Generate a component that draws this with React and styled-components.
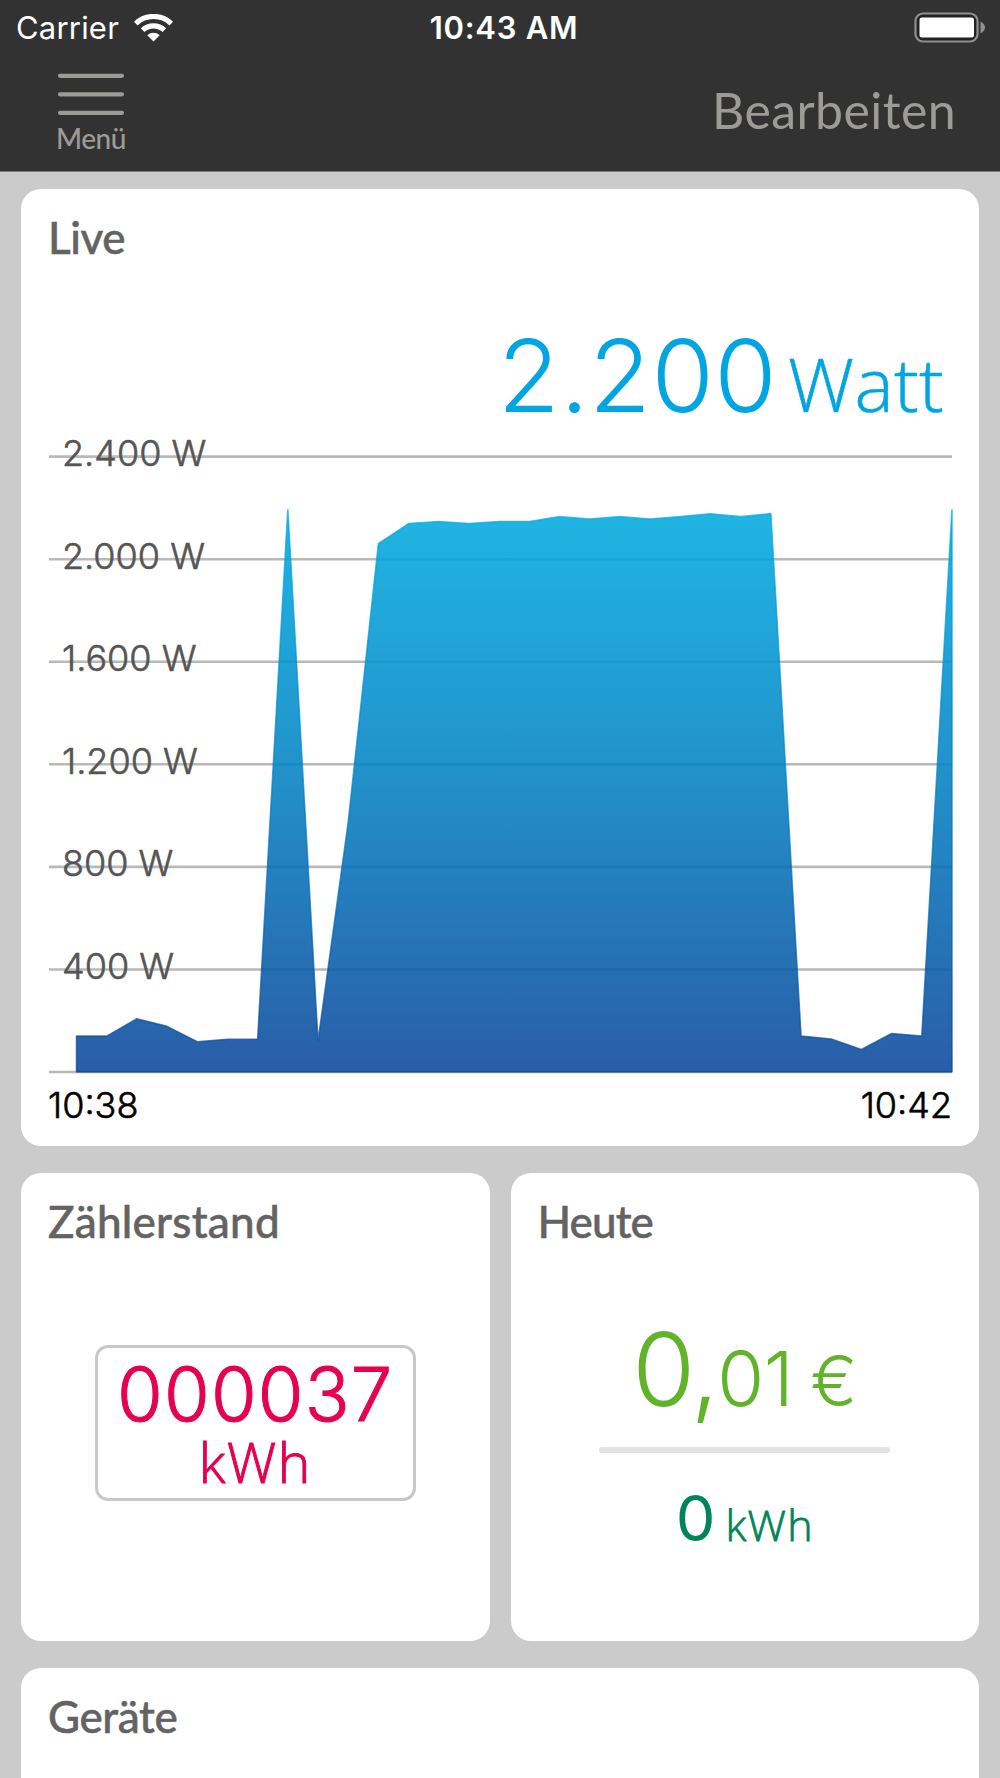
import styled, { createGlobalStyle } from "styled-components";

const GlobalStyles = createGlobalStyle`
  *, *::before, *::after {
    box-sizing: border-box;
  }

  body {
    margin: 0;
    background: #cbcbcb;
    font-family: Lato, "Open Sans", sans-serif;
    overflow: hidden;
  }
`;

const Screen = styled.div`
  width: 1000px;
  height: 1778px;
  overflow: hidden;
  background: #cbcbcb;
`;

const Header = styled.header`
  height: 172px;
  background: #323232;
  border-bottom: 1px solid #7d7d7d;
`;

const StatusBar = styled.div`
  display: grid;
  grid-template-columns: 1fr auto 1fr;
  align-items: center;
  height: 55px;
  padding: 0 15px 0 16px;
  color: #fff;
  font-family: Inter, sans-serif;
  font-size: 31px;
  line-height: 55px;
`;

const Carrier = styled.div`
  display: flex;
  align-items: center;
  gap: 15px;
  letter-spacing: 0.2px;
`;

const Clock = styled.div`
  font-weight: 600;
  letter-spacing: 0.7px;
  padding-left: 7px;
`;

const Battery = styled.svg`
  justify-self: end;
`;

const NavBar = styled.nav`
  display: flex;
  justify-content: space-between;
  height: 116px;
  padding: 18px 44px 0 57px;
  color: #9d9b97;
`;

const MenuButton = styled.button`
  display: flex;
  flex-direction: column;
  align-items: center;
  gap: 5px;
  width: 70px;
  padding: 0 2px 0 0;
  border: none;
  background: none;
  color: inherit;
  font-family: inherit;
  font-size: 28px;
  font-weight: 500;
  letter-spacing: -0.5px;
  line-height: 32px;
`;

const EditButton = styled.button`
  height: 74px;
  padding: 0;
  border: none;
  background: none;
  color: inherit;
  font-family: inherit;
  font-size: 50px;
  letter-spacing: 0.4px;
  line-height: 74px;
`;

const Dashboard = styled.main`
  display: grid;
  grid-template-columns: 1fr 1fr;
  grid-template-rows: 957px 468px 468px;
  column-gap: 21px;
  row-gap: 27px;
  padding: 17px 21px 0;
`;

const Card = styled.section`
  display: flex;
  flex-direction: column;
  grid-column: ${(props) => (props.$wide ? "1 / -1" : "auto")};
  padding: 21px 28px 0;
  border-radius: 20px;
  background: #fff;
`;

const Title = styled.h2`
  margin: 0 0 0 -1px;
  color: #636363;
  font-size: 44px;
  font-weight: 500;
  letter-spacing: ${(props) => props.$spacing || "-0.4px"};
  line-height: 54px;
  -webkit-text-stroke: 0.5px;
`;

const Power = styled.div`
  display: flex;
  align-items: baseline;
  justify-content: flex-end;
  height: 120px;
  margin-top: 51px;
  padding-right: 7px;
  color: #00a5e1;
  line-height: 120px;
  font-weight: 300;
`;

const PowerValue = styled.span`
  font-family: Inter, sans-serif;
  font-size: 101px;
  letter-spacing: 0.4px;
`;

const PowerUnit = styled.span`
  margin-left: 11px;
  font-family: "Open Sans", sans-serif;
  font-size: 74px;
  letter-spacing: 0.3px;
  -webkit-text-stroke: 0.6px;
`;

const Chart = styled.svg`
  display: block;
  margin-top: -19px;
`;

const AxisLabel = styled.text`
  fill: #555;
  stroke: #555;
  stroke-width: 0.6px;
  font-family: Inter, sans-serif;
  font-size: 36px;
  font-weight: 300;
`;

const TimeRange = styled.div`
  display: flex;
  justify-content: space-between;
  margin: 7px -1px 0;
  color: #000;
  font-family: Inter, sans-serif;
  font-size: 36px;
  font-weight: 300;
  line-height: 44px;
  -webkit-text-stroke: 0.6px;
`;

const Meter = styled.div`
  align-self: center;
  width: 321px;
  height: 156px;
  margin-top: 97px;
  border: 3px solid #c8c8c8;
  border-radius: 13px;
  color: #e60050;
  font-weight: 300;
  text-align: center;
  -webkit-text-stroke: 1px;
`;

const MeterValue = styled.div`
  height: 64px;
  margin-top: 14px;
  font-family: Inter, sans-serif;
  font-size: 74px;
  letter-spacing: 1.2px;
  line-height: 64px;
`;

const MeterUnit = styled.div`
  height: 66px;
  margin-top: 3px;
  font-family: "Open Sans", sans-serif;
  font-size: 55px;
  letter-spacing: 1.6px;
  line-height: 66px;
`;

const Today = styled.div`
  display: flex;
  flex-direction: column;
  align-items: center;
`;

const Cost = styled.div`
  display: flex;
  align-items: baseline;
  height: 100px;
  margin-top: 71px;
  color: #61b329;
  font-family: Inter, sans-serif;
  font-size: 102px;
  font-weight: 300;
  letter-spacing: -2px;
  line-height: 100px;
`;

const Cents = styled.span`
  font-size: 76px;
  letter-spacing: -0.5px;
`;

const Currency = styled.span`
  margin-left: 17px;
  font-size: 70px;
  letter-spacing: 0;
`;

const Divider = styled.hr`
  width: 291px;
  height: 6px;
  margin: 28px 0 0;
  border: none;
  border-radius: 3px;
  background: #e3e3e3;
`;

const Energy = styled.div`
  display: flex;
  align-items: baseline;
  height: 70px;
  margin-top: 30px;
  color: #008558;
  font-family: Inter, sans-serif;
  font-size: 63px;
  font-weight: 400;
  line-height: 70px;
`;

const EnergyUnit = styled.span`
  margin-left: 10px;
  font-family: "Open Sans", sans-serif;
  font-size: 43px;
  font-weight: 300;
  letter-spacing: 1.3px;
  -webkit-text-stroke: 0.8px;
`;

// one sample every ten seconds or so, in watts
const samples = [
  140, 140, 208, 178, 118, 128, 128, 2195, 120, 975, 2061, 2139, 2147, 2139,
  2147, 2147, 2166, 2157, 2166, 2157, 2166, 2177, 2166, 2178, 140, 129, 88, 150,
  140, 2195,
];

const gridValues = [2400, 2000, 1600, 1200, 800, 400, 0];

const CHART_START = 27.5;
const CHART_END = 903;
const BASELINE = 656;

function yFor(watts) {
  return BASELINE - watts * 0.2564;
}

function LiveChart() {
  const step = (CHART_END - CHART_START) / (samples.length - 1);
  const line = samples
    .map((watts, i) => `${CHART_START + i * step},${yFor(watts)}`)
    .join(" ");
  const area = `${CHART_START},${BASELINE} ${line} ${CHART_END},${BASELINE}`;

  return (
    <Chart width="904" height="660" viewBox="0 0 904 660">
      <defs>
        <linearGradient
          id="power"
          gradientUnits="userSpaceOnUse"
          x1="0"
          y1="94"
          x2="0"
          y2={BASELINE}
        >
          <stop offset="0" stopColor="#00abe0" />
          <stop offset="0.45" stopColor="#0384c4" />
          <stop offset="1" stopColor="#0b479b" />
        </linearGradient>
      </defs>
      {gridValues.map((value) => (
        <g key={value}>
          <line
            x1="0"
            x2="903"
            y1={yFor(value)}
            y2={yFor(value)}
            stroke="#b9b9b9"
            strokeWidth="2.6"
          />
          {value > 0 && (
            <AxisLabel x="13" y={yFor(value) + 9.5}>
              {value.toLocaleString("de-DE")} W
            </AxisLabel>
          )}
        </g>
      ))}
      <polygon points={area} fill="url(#power)" fillOpacity="0.88" />
      <polygon
        points={area}
        fill="none"
        stroke="url(#power)"
        strokeWidth="1.6"
        strokeOpacity="0.7"
        strokeLinejoin="bevel"
      />
    </Chart>
  );
}

function WifiIcon() {
  return (
    <svg width="39" height="28" viewBox="0 0 39 28" fill="none" stroke="#fff">
      <path d="M1.8 9.6 C11.5 0.1 27.5 0.1 37.2 9.6" strokeWidth="5.2" />
      <path d="M8.6 16.2 C14.8 10.4 24.2 10.4 30.4 16.2" strokeWidth="5.2" />
      <path
        d="M13.3 21.2 C16.8 17.9 22.2 17.9 25.7 21.2 L19.5 27.4 Z"
        fill="#fff"
        stroke="none"
      />
    </svg>
  );
}

function BatteryIcon() {
  return (
    <Battery width="71" height="31" viewBox="0 0 71 31">
      <rect
        x="1.5"
        y="1.5"
        width="62"
        height="28"
        rx="7.5"
        fill="#222"
        stroke="#8f8f8f"
        strokeWidth="2.2"
      />
      <rect x="5.5" y="5.5" width="54.5" height="20" rx="2.5" fill="#fff" />
      <path d="M66.5 9.5 Q71 12 71 15.5 Q71 19 66.5 21.5 Z" fill="#8f8f8f" />
    </Battery>
  );
}

function MenuIcon() {
  return (
    <svg
      width="68"
      height="44"
      viewBox="0 0 68 44"
      stroke="#9d9b97"
      strokeWidth="4.2"
      strokeLinecap="round"
    >
      <path d="M3 2.8H65M3 21.3H65M3 39.8H65" />
    </svg>
  );
}

function App() {
  return (
    <Screen>
      <GlobalStyles />
      <Header>
        <StatusBar>
          <Carrier>
            Carrier
            <WifiIcon />
          </Carrier>
          <Clock>10:43 AM</Clock>
          <BatteryIcon />
        </StatusBar>
        <NavBar>
          <MenuButton>
            <MenuIcon />
            Menü
          </MenuButton>
          <EditButton>Bearbeiten</EditButton>
        </NavBar>
      </Header>

      <Dashboard>
        <Card $wide>
          <Title>Live</Title>
          <Power>
            <PowerValue>2.200</PowerValue>
            <PowerUnit>Watt</PowerUnit>
          </Power>
          <LiveChart />
          <TimeRange>
            <span>10:38</span>
            <span>10:42</span>
          </TimeRange>
        </Card>

        <Card>
          <Title $spacing="0.25px">Zählerstand</Title>
          <Meter>
            <MeterValue>000037</MeterValue>
            <MeterUnit>kWh</MeterUnit>
          </Meter>
        </Card>

        <Card>
          <Title $spacing="-0.9px">Heute</Title>
          <Today>
            <Cost>
              0,<Cents>01</Cents>
              <Currency>€</Currency>
            </Cost>
            <Divider />
            <Energy>
              0<EnergyUnit>kWh</EnergyUnit>
            </Energy>
          </Today>
        </Card>

        <Card $wide>
          <Title>Geräte</Title>
        </Card>
      </Dashboard>
    </Screen>
  );
}

export default App;
